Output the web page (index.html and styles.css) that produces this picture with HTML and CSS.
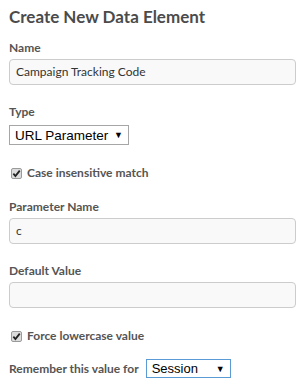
FILE: index.html
```html
<!DOCTYPE html>
<html lang="en">
<head>
    <meta charset="UTF-8">
    <title>Create New Data Element</title>
    <link rel="stylesheet" href="styles.css">
</head>
<body>
    <div class="panel">
        <h1>Create New Data Element</h1>

        <div class="field name-field">
            <label class="label">Name</label>
            <div class="text-input">Campaign Tracking Code</div>
        </div>

        <div class="field">
            <label class="label">Type</label>
            <div class="select type-select">
                <span>URL Parameter</span>
                <span class="arrow">&#9660;</span>
            </div>
        </div>

        <label class="check">
            <span class="box"><svg width="9" height="9" viewBox="0 0 10 10"><path d="M1.5 5.2l2.3 2.6 4.8-6" fill="none" stroke="#222" stroke-width="2"/></svg></span>
            Case insensitive match
        </label>

        <div class="field param-field">
            <label class="label">Parameter Name</label>
            <div class="text-input">c</div>
        </div>

        <div class="field">
            <label class="label">Default Value</label>
            <div class="text-input"></div>
        </div>

        <label class="check">
            <span class="box"><svg width="9" height="9" viewBox="0 0 10 10"><path d="M1.5 5.2l2.3 2.6 4.8-6" fill="none" stroke="#222" stroke-width="2"/></svg></span>
            Force lowercase value
        </label>

        <div class="remember">
            <span class="label inline">Remember this value for</span>
            <div class="select focused">
                <span>Session</span>
                <span class="arrow">&#9660;</span>
            </div>
        </div>
    </div>
</body>
</html>
```

FILE: styles.css
```css
body {
    margin: 0;
    background: #fff;
    font-family: Lato, "Open Sans", sans-serif;
    color: #4b4b4b;
}

.panel {
    padding: 7px 10px 0 9px;
}

h1 {
    margin: 0 0 14px 0;
    font-size: 17px;
    line-height: 20px;
    font-weight: 700;
    color: #4b4b4b;
}

.field {
    margin-bottom: 22px;
}

.name-field,
.param-field {
    margin-bottom: 20px;
}

.label {
    display: block;
    font-size: 12px;
    line-height: 14px;
    font-weight: 700;
    color: #555;
    margin-bottom: 4px;
}

.label.inline {
    display: inline;
    margin: 0;
}

.text-input {
    height: 24px;
    border: 1px solid #ccc;
    border-radius: 4px;
    background: #f9f9f9;
    padding: 0 6px;
    font-size: 12px;
    line-height: 24px;
    color: #333;
}

.select {
    display: flex;
    align-items: center;
    justify-content: space-between;
    box-sizing: border-box;
    height: 20px;
    border: 1px solid #a6a6a6;
    background: #fff;
    padding: 0 5px 0 5px;
    font-family: "Liberation Sans", Arial, sans-serif;
    font-size: 13.5px;
    white-space: nowrap;
    color: #000;
}

.type-select {
    width: 120px;
    margin-top: 6px;
}

.select.focused {
    border-color: #5b9bd5;
    width: 85px;
    height: 19px;
    font-size: 13px;
}

.arrow {
    font-size: 9px;
}

.check {
    display: flex;
    align-items: center;
    gap: 5px;
    font-size: 12px;
    line-height: 14px;
    font-weight: 700;
    color: #555;
    margin: -2px 0 20px 2px;
}

.box {
    display: inline-flex;
    align-items: center;
    justify-content: center;
    box-sizing: border-box;
    width: 11px;
    height: 11px;
    border: 1px solid #9a9a9a;
    border-radius: 2px;
    background: #dcdcdc;
}

.field + .check {
    margin-top: -1px;
}

.remember {
    display: flex;
    align-items: center;
    gap: 7px;
    margin-top: -4px;
}
```
